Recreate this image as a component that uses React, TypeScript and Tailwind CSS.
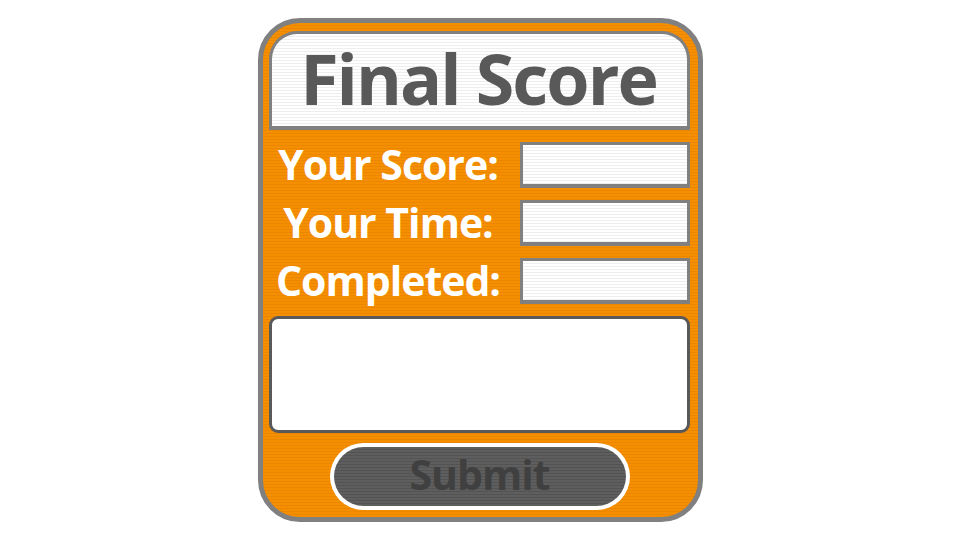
const orange =
  "bg-[repeating-linear-gradient(to_bottom,#f68f00_0px,#f68f00_2px,#ea8600_2px,#ea8600_3px)]";
const paper =
  "bg-[repeating-linear-gradient(to_bottom,#ffffff_0px,#ffffff_2px,#eeeeee_2px,#eeeeee_3px)]";

function Field({ label }: { label: string }) {
  return (
    <div className="flex items-center h-[46px]">
      <div className="w-[238px] mr-[13px] text-center text-white font-bold text-[41px] leading-none tracking-[-1px] mt-[-2px]">
        {label}
      </div>
      <div
        className={`w-[170px] h-[46px] border-[3px] border-[#808080] border-b-[4px] ${paper}`}
      />
    </div>
  );
}

export default function App() {
  return (
    <div
      className="w-[960px] h-[540px] bg-white flex justify-center pt-[18px]"
      style={{ fontFamily: "'Open Sans', Lato, sans-serif" }}
    >
      <div
        className={`w-[445px] h-[504px] ml-[1px] rounded-[42px] border-[5px] border-[#808080] ${orange} pl-[6px] pr-[8px] pt-[8px] flex flex-col`}
      >
        <div
          className={`h-[99px] rounded-t-[28px] border-[3px] border-b-[4px] border-[#808080] ${paper} flex items-center justify-center`}
        >
          <span className="text-[#595959] font-bold text-[70px] leading-none tracking-[-2px] mt-[-4px] mr-[2px]">
            Final Score
          </span>
        </div>
        <div className="flex flex-col gap-[12px] mt-[12px]">
          <Field label="Your Score:" />
          <Field label="Your Time:" />
          <Field label="Completed:" />
        </div>
        <div className="mt-[12px] h-[117px] rounded-[9px] border-[3px] border-[#595959] bg-white" />
        <div className="flex justify-center mt-[10px]">
          <div className="w-[300px] h-[67px] rounded-full bg-white p-[4px]">
            <div className="h-full rounded-full bg-[repeating-linear-gradient(to_bottom,#5e5e5e_0px,#5e5e5e_2px,#535353_2px,#535353_3px)] flex items-center justify-center">
              <span className="text-[#404040] font-bold text-[41px] leading-none tracking-[-1px] mt-[-4px]">
                Submit
              </span>
            </div>
          </div>
        </div>
      </div>
    </div>
  );
}
